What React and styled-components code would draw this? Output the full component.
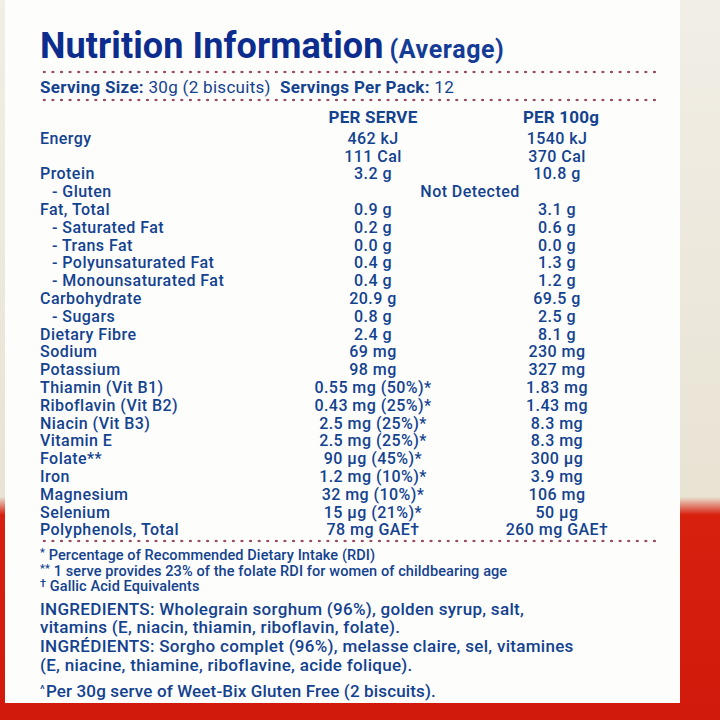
import React from 'react';
import styled, { createGlobalStyle } from 'styled-components';

const GlobalStyle = createGlobalStyle`
    html, body {
        margin: 0;
        padding: 0;
    }
    body {
        font-family: 'Roboto', 'Liberation Sans', sans-serif;
    }
`;

const rows = [
    { label: 'Energy', serve: ['462 kJ', '111 Cal'], per100: ['1540 kJ', '370 Cal'] },
    { label: 'Protein', serve: ['3.2 g'], per100: ['10.8 g'] },
    { label: '- Gluten', sub: true, both: 'Not Detected' },
    { label: 'Fat, Total', serve: ['0.9 g'], per100: ['3.1 g'] },
    { label: '- Saturated Fat', sub: true, serve: ['0.2 g'], per100: ['0.6 g'] },
    { label: '- Trans Fat', sub: true, serve: ['0.0 g'], per100: ['0.0 g'] },
    { label: '- Polyunsaturated Fat', sub: true, serve: ['0.4 g'], per100: ['1.3 g'] },
    { label: '- Monounsaturated Fat', sub: true, serve: ['0.4 g'], per100: ['1.2 g'] },
    { label: 'Carbohydrate', serve: ['20.9 g'], per100: ['69.5 g'] },
    { label: '- Sugars', sub: true, serve: ['0.8 g'], per100: ['2.5 g'] },
    { label: 'Dietary Fibre', serve: ['2.4 g'], per100: ['8.1 g'] },
    { label: 'Sodium', serve: ['69 mg'], per100: ['230 mg'] },
    { label: 'Potassium', serve: ['98 mg'], per100: ['327 mg'] },
    { label: 'Thiamin (Vit B1)', serve: ['0.55 mg (50%)*'], per100: ['1.83 mg'] },
    { label: 'Riboflavin (Vit B2)', serve: ['0.43 mg (25%)*'], per100: ['1.43 mg'] },
    { label: 'Niacin (Vit B3)', serve: ['2.5 mg (25%)*'], per100: ['8.3 mg'] },
    { label: 'Vitamin E', serve: ['2.5 mg (25%)*'], per100: ['8.3 mg'] },
    { label: 'Folate**', serve: ['90 µg (45%)*'], per100: ['300 µg'] },
    { label: 'Iron', serve: ['1.2 mg (10%)*'], per100: ['3.9 mg'] },
    { label: 'Magnesium', serve: ['32 mg (10%)*'], per100: ['106 mg'] },
    { label: 'Selenium', serve: ['15 µg (21%)*'], per100: ['50 µg'] },
    { label: 'Polyphenols, Total', serve: ['78 mg GAE†'], per100: ['260 mg GAE†'] },
];

const App = () => {
    return (
        <>
            <GlobalStyle />
            <Page>
                <Card>
                    <Title>
                        Nutrition Information<small>(Average)</small>
                    </Title>
                    <Dots />
                    <Serving>
                        <b>Serving Size:</b> 30g (2 biscuits)&nbsp;&nbsp;
                        <b>Servings Per Pack:</b> 12
                    </Serving>
                    <Dots $top={1} />
                    <Table>
                        <Head />
                        <Head>PER SERVE</Head>
                        <Head>PER 100g</Head>
                        {rows.map((r) => (
                            <React.Fragment key={r.label}>
                                <Label $sub={r.sub}>{r.label}</Label>
                                {r.both ? (
                                    <Both>{r.both}</Both>
                                ) : (
                                    <>
                                        <Value>
                                            {r.serve.map((v) => (
                                                <div key={v}>{v}</div>
                                            ))}
                                        </Value>
                                        <Value $right>
                                            {r.per100.map((v) => (
                                                <div key={v}>{v}</div>
                                            ))}
                                        </Value>
                                    </>
                                )}
                            </React.Fragment>
                        ))}
                    </Table>
                    <Dots $top={0} />
                    <Notes>
                        <div><sup>*</sup> Percentage of Recommended Dietary Intake (RDI)</div>
                        <div><sup>**</sup> 1 serve provides 23% of the folate RDI for women of childbearing age</div>
                        <div><sup>†</sup> Gallic Acid Equivalents</div>
                    </Notes>
                    <Ingredients>
                        <div>INGREDIENTS: Wholegrain sorghum (96%), golden syrup, salt,</div>
                        <div>vitamins (E, niacin, thiamin, riboflavin, folate).</div>
                        <div>INGRÉDIENTS: Sorgho complet (96%), melasse claire, sel, vitamines</div>
                        <div>(E, niacine, thiamine, riboflavine, acide folique).</div>
                    </Ingredients>
                    <Footer>
                        <sup>^</sup>Per 30g serve of Weet-Bix Gluten Free (2 biscuits).
                    </Footer>
                </Card>
            </Page>
        </>
    );
};

export default App;

const Page = styled.div`
    width: 720px;
    height: 720px;
    overflow: hidden;
    box-sizing: border-box;
    padding: 0 40px 0 5px;
    background: linear-gradient(
        to bottom,
        #f1eee6 0,
        #e8e3d3 69%,
        #d8200f 71.5%,
        #d21a0c 100%
    );
`;

const Card = styled.div`
    height: 703px;
    box-sizing: border-box;
    background: #fdfdfc;
    padding: 28px 0 0 35px;
    color: #13428f;
    font-weight: 500;
`;

const Title = styled.div`
    font-size: 36px;
    line-height: 36px;
    font-weight: 700;
    letter-spacing: 0.1px;
    color: #0c2d8e;
    white-space: nowrap;

    small {
        margin-left: 6px;
        font-size: 25px;
        letter-spacing: 0.6px;
        color: #143c96;
    }
`;

const Dots = styled.div`
    width: 618px;
    height: 4px;
    margin-top: ${(p) => (p.$top ?? 2)}px;
    background-image: radial-gradient(circle, #9a4d62 1.1px, transparent 1.6px);
    background-size: 8.6px 4px;
    background-repeat: repeat-x;
`;

const Serving = styled.div`
    margin-top: 3px;
    font-size: 17px;
    line-height: 20px;
    letter-spacing: 0.3px;
    font-weight: 400;
    white-space: nowrap;

    b {
        font-weight: 700;
    }
`;

const Table = styled.div`
    margin-top: 7px;
    display: grid;
    grid-template-columns: 258px 150px 226px;
    font-size: 16px;
    line-height: 17.8px;
    letter-spacing: 0.45px;
`;

const Head = styled.div`
    padding-bottom: 3px;
    text-align: center;
    font-weight: 700;
    font-size: 17px;
    letter-spacing: 0.2px;
`;

const Label = styled.div`
    padding-left: ${(p) => (p.$sub ? '12px' : '0')};
    white-space: nowrap;
`;

const Value = styled.div`
    text-align: center;
    white-space: nowrap;
    padding-right: ${(p) => (p.$right ? '8px' : '0')};
`;

const Both = styled.div`
    grid-column: 2 / 4;
    text-align: center;
    padding-right: 32px;
`;

const Notes = styled.div`
    margin-top: 5px;
    font-size: 14.5px;
    line-height: 15.5px;
    letter-spacing: 0.1px;
    white-space: nowrap;

    sup {
        font-size: 11px;
        line-height: 0;
        vertical-align: baseline;
        position: relative;
        top: -0.35em;
    }
`;

const Ingredients = styled.div`
    margin-top: 5px;
    font-size: 17px;
    line-height: 18.7px;
    letter-spacing: 0.3px;
    white-space: nowrap;
`;

const Footer = styled.div`
    margin-top: 8px;
    font-size: 17px;
    line-height: 18px;
    letter-spacing: 0.15px;

    sup {
        font-size: 11px;
        line-height: 0;
        vertical-align: baseline;
        position: relative;
        top: -0.45em;
        margin-right: 1px;
    }
`;
